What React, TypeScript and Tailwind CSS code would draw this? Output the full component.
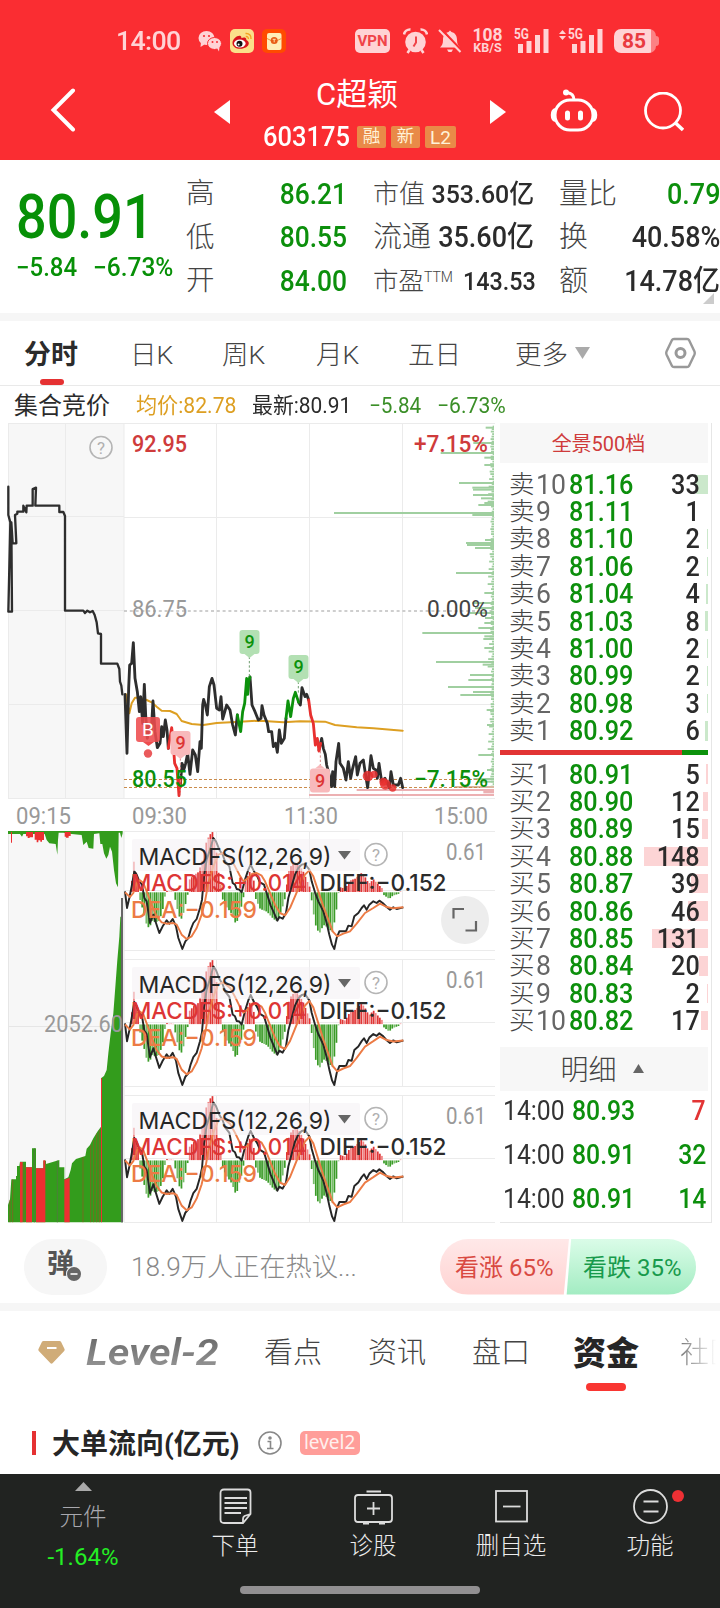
import clsx from 'clsx';

type Point = [number, number];

const GREEN = '#0c8f0c';
const RED = '#e23434';

const asks: [string, string, number, number][] = [
  ['10', '81.16', 33, 12], ['9', '81.11', 1, 0], ['8', '81.10', 2, 1], ['7', '81.06', 2, 1], ['6', '81.04', 4, 2],
  ['5', '81.03', 8, 3], ['4', '81.00', 2, 1], ['3', '80.99', 2, 1], ['2', '80.98', 3, 1], ['1', '80.92', 6, 3],
];
const bids: [string, string, number, number][] = [
  ['1', '80.91', 5, 2], ['2', '80.90', 12, 5], ['3', '80.89', 15, 6], ['4', '80.88', 148, 64], ['5', '80.87', 39, 17],
  ['6', '80.86', 46, 20], ['7', '80.85', 131, 56], ['8', '80.84', 20, 9], ['9', '80.83', 2, 1], ['10', '80.82', 17, 7],
];
const trades = [
  { price: '80.93', qty: 7, up: true },
  { price: '80.91', qty: 32, up: false },
  { price: '80.91', qty: 14, up: false },
];

// Chart series are stored at 3x resolution and scaled down when drawn
const AUCTION = '25,215 25,300 31,322 25,590 36,590 34,322 38,385 49,385 45,300 52,296 52,290 70,290 70,272 79,292 80,272 98,272 98,222 108,218 106,272 178,272 178,291 190,291 195,303 195,587 250,587 255,594 262,587 270,592 278,588 284,600 290,622 294,655 303,657 303,746 352,746 358,762 360,800 364,812 367,838';
const PRICE: { color: string; points: string }[] = [
  { color: '#2e2e2e', points: '375,838 381,1015 386,820 389,750 395,745 400,683 405,790 412,830 418,890 422,845 428,925 433,808 437,900 442,970 448,930 454,945 459,858 465,950 472,998 480,985 485,935 490,965 496,915 501,945 505,1000' },
  { color: '#2e2e2e', points: '541,1110 546,1045 552,1062 557,1045 563,1015 570,1078 578,1005 586,1020 593,1070 600,980 604,1000 608,870 611,853 616,870 622,900 628,815 636,790 642,810 650,880 658,885 663,845 668,912 680,870 690,885 698,930 706,960 712,900' },
  { color: '#2e2e2e', points: '750,786 756,870 765,890 775,915 783,910 786,872 792,900 802,925 806,950 815,950 820,995 827,985 832,1012 838,945 844,985 853,970 858,910' },
  { color: '#2e2e2e', points: '896,862 901,870 906,818 915,845 920,838 926,855' },
  { color: '#2e2e2e', points: '957,1005 965,970 970,1000 976,1018 980,1050 988,1080 995,1115 998,1070 1004,1115 1008,1040 1016,985 1020,1045 1030,1060 1038,1095 1045,1040 1052,1090 1058,1060 1067,1025 1072,1080 1080,1045 1090,1035 1096,1075 1103,1118 1108,1070 1113,1022 1120,1060 1128,1065 1132,1090 1137,1045 1145,1100 1155,1090 1168,1118 1173,1070 1180,1110 1195,1110 1202,1090 1208,1118' },
  { color: '#e8302f', points: '505,1000 515,938 519,975 524,1045 531,1060 537,1142 541,1095' },
  { color: '#e8302f', points: '926,855 932,900 940,925 946,990 952,970 957,1008 962,985' },
  { color: '#0c920c', points: '712,900 722,950 728,890 734,865 740,790 743,838 746,800 750,786' },
  { color: '#0c920c', points: '858,910 864,858 872,905 880,850 886,832 896,862' },
];
const AVERAGE = '378,838 383,870 388,895 395,865 405,848 420,848 440,855 455,862 470,875 485,887 510,888 530,897 545,918 575,927 610,930 650,924 720,920 780,917 850,922 900,919 975,920 1005,930 1070,937 1120,940 1208,947';

const PROFILE: Point[] = [
  [38, 737], [84, 700], [114, 602], [128, 733], [150, 733], [204, 657], [218, 697], [224, 699], [240, 699], [250, 723],
  [264, 733], [270, 715], [294, 282], [300, 697], [375, 735], [384, 678], [390, 681], [399, 705], [474, 648], [534, 733],
  [564, 697], [579, 705], [594, 690], [609, 735], [624, 733], [639, 715], [654, 547], [664, 733], [672, 730], [699, 733],
  [741, 588], [749, 728], [780, 690], [795, 685], [816, 624], [831, 699], [840, 661], [885, 740], [930, 741], [1020, 715],
  [1065, 741], [1092, 700], [1100, 715],
];

const DIFF = '375,215 381,265 388,235 395,200 403,155 410,165 418,185 426,195 433,235 440,245 450,310 460,285 468,310 478,340 488,320 500,302 508,312 518,298 528,320 535,355 547,388 556,365 565,355 572,330 580,310 590,298 600,265 606,240 612,170 620,120 630,90 640,55 648,65 658,90 668,105 675,125 688,140 698,190 705,195 710,208 718,210 725,218 735,180 745,150 752,135 762,155 772,170 780,188 792,195 800,220 812,258 820,275 832,303 838,292 848,297 858,280 865,235 875,200 885,165 895,145 905,135 915,133 928,150 935,185 945,218 955,245 970,275 980,310 988,345 996,375 1003,388 1010,355 1018,335 1038,335 1045,318 1055,320 1063,290 1075,280 1085,265 1092,257 1100,270 1108,255 1120,245 1130,250 1138,243 1148,250 1160,262 1170,270 1180,263 1190,268 1210,263';
const DEA = '375,218 390,232 400,220 410,190 420,182 430,190 440,215 455,255 470,290 485,308 500,312 520,310 530,315 545,345 560,358 575,350 590,325 605,285 615,245 625,190 640,140 655,105 670,100 690,115 705,140 718,165 730,185 745,175 758,162 770,160 785,168 795,185 810,220 825,255 840,280 855,287 870,265 885,230 900,195 915,165 928,152 940,170 955,215 970,260 985,300 998,335 1012,350 1030,342 1050,335 1070,312 1095,280 1120,265 1140,252 1160,262 1180,266 1210,263';
const HIST: Point[] = [
  [394, -20], [400, -100], [405, -62], [412, -50], [419, 20], [430, 60], [440, 100], [448, 108], [455, 85], [465, 90], [478, 85],
  [488, 50], [495, 8], [503, -8], [510, 6], [516, -10], [523, 12], [530, 45], [541, 85], [548, 70], [555, 40], [562, 12],
  [566, -35], [580, -50], [595, -60], [605, -90], [615, -140], [625, -165], [636, -182], [642, -165], [648, -130], [655, -60],
  [662, -20], [667, 20], [680, 45], [695, 65], [708, 98], [718, 60], [728, 30], [735, -30], [745, -55], [752, -65], [762, -30],
  [767, 20], [780, 50], [800, 58], [820, 80], [832, 88], [840, 65], [850, 35], [858, 5], [862, -50], [870, -75], [883, -90],
  [895, -85], [910, -60], [922, -30], [931, -10], [935, 30], [945, 95], [957, 125], [970, 98], [982, 105], [996, 120], [1006, 75],
  [1014, 8], [1018, -15], [1035, -10], [1050, -35], [1065, -40], [1085, -58], [1097, -42], [1106, -25], [1120, -38], [1132, -25], [1147, -10],
  [1151, 8], [1167, 20], [1178, 10], [1196, 4], [1204, -5],
];

function levelAt(x: number) {
  const i = HIST.findIndex(([px]) => px >= x);
  if (i <= 0) return 0;
  const [x0, y0] = HIST[i - 1];
  const [x1, y1] = HIST[i];
  return y0 + ((y1 - y0) * (x - x0)) / (x1 - x0);
}

const macdBars = Array.from({ length: 131 }, (_, i) => {
  const x = 395 + i * 6.2;
  return { x, h: levelAt(x), dark: i % 3 !== 1 };
});

interface LabelProps {
  x: number;
  y: number;
  w: number;
  children: string;
  fill?: string;
  size?: number;
  weight?: number;
  family?: string;
}

function Label({ x, y, w, children, fill = '#999', size = 23.5, weight = 400, family = 'Roboto' }: LabelProps) {
  return (
    <text x={x} y={y} textLength={w} lengthAdjust="spacingAndGlyphs" fill={fill} fontSize={size} fontWeight={weight} fontFamily={`${family}, sans-serif`}>
      {children}
    </text>
  );
}

function HelpMark({ cx, cy }: { cx: number; cy: number }) {
  return (
    <g>
      <circle cx={cx} cy={cy} r="11" fill="none" stroke="#b5b5b5" strokeWidth="1.6" />
      <text x={cx} y={cy + 6} textAnchor="middle" fontSize="17" fill="#b0b0b0" fontFamily="Roboto, sans-serif">?</text>
    </g>
  );
}

function Flag({ x, y, text, bg, fg, tip }: { x: number; y: number; text: string; bg: string; fg: string; tip: 'down' | 'up' }) {
  return (
    <g>
      <rect x={x - 10} y={y - 12} width="20" height="24" rx="3" fill={bg} />
      {tip === 'down' ? <path d={`M${x - 5} ${y + 12}h10l-5 4z`} fill={bg} /> : <path d={`M${x - 5} ${y - 12}h10l-5 -4z`} fill={bg} />}
      <text x={x} y={y + 6} textAnchor="middle" fontSize="18" fontWeight="500" fill={fg} fontFamily="Roboto, sans-serif">{text}</text>
    </g>
  );
}

function MacdPanel({ top, height, labelShift }: { top: number; height: number; labelShift: number }) {
  const k = height / 119;
  return (
    <g>
      <g stroke="#ebebeb" fill="none">
        <path d={`M124 ${top}.5H495M124 ${top + height}.5H495M402.5 ${top}V${top + height}M216.5 ${top}V${top + height}M309.5 ${top}V${top + height}M124 ${top + height / 2}H495`} />
      </g>
      <g transform={`translate(0 ${top}) scale(0.33333 ${0.33333 * k}) translate(0 -34)`}>
        {macdBars.map(({ x, h, dark }) => (
          <rect
            key={x}
            x={x - 2}
            width="5.2"
            y={h < 0 ? 217 + h : 218}
            height={Math.abs(h)}
            fill={h < 0 ? (dark ? '#e03636' : '#f08484') : dark ? '#3b9c28' : '#79bd6b'}
          />
        ))}
        <polyline points={DIFF} fill="none" stroke="#262626" strokeWidth="5.800" strokeLinejoin="round" />
        <polyline points={DEA} fill="none" stroke="#ec7b45" strokeWidth="5.800" strokeLinejoin="round" />
      </g>
      <g transform={`translate(0 ${labelShift})`}>
        <rect x="132" y="839" width="228" height="32" rx="2" fill="#f4f0f4" fillOpacity="0.55" />
        <Label x={138.5} y={864.5} w={193} fill="#262626" size={23.5} family="Inter">MACDFS(12,26,9)</Label>
        <path d="M338 851h13l-6.500 8.500z" fill="#666" />
        <HelpMark cx={376} cy={854.500} />
        <Label x={446} y={860} w={40} size={23}>0.61</Label>
        <Label x={131} y={891} w={175} fill="#dd3535" size={23} weight={500} family="Inter">MACDFS:+0.014</Label>
        <Label x={319.5} y={891} w={127} fill="#2b2b2b" size={23} weight={500} family="Inter">DIFF:−0.152</Label>
        <Label x={131} y={917.5} w={126} fill="#ec7b45" size={23} weight={500} family="Inter">DEA:−0.159</Label>
      </g>
    </g>
  );
}

function StockChart() {
  return (
    <svg className="block h-[800px] w-[500px] shrink-0" viewBox="0 423 500 800">
      {/* grid */}
      <rect x="8" y="423" width="116" height="375" fill="#f7f7f7" />
      <g stroke="#ebebeb" fill="none">
        <path d="M8 423.5H495M8 798.5H495M8.5 423V798M65.500 423V798M124 423V798M216.500 423V798M309.500 423V798M402.500 423V798" />
        <path d="M8 516.500H124M8 610.500H124M8 704.500H495M124 517.500H495" />
      </g>
      <path d="M124 611H495" stroke="#bfbfbf" strokeWidth="1.4" strokeDasharray="3 2.800" />

      {/* price distribution */}
      <g transform="translate(240 415) scale(0.33333)">
        {Array.from({ length: 145 }, (_, i) => (
          <rect key={i} x={762 - (4 + ((i * 37) % 11) * (i % 3 === 0 ? 1.5 : 0.7))} y={32 + i * 7.5} width={4 + ((i * 37) % 11) * (i % 3 === 0 ? 1.5 : 0.7)} height="5.500" fill="#a0cfa0" />
        ))}
        {PROFILE.map(([y, x]) => <rect key={y} x={x} y={y - 3} width={762 - x} height="6" fill="#a0cfa0" />)}
        <rect x="350" y="1122" width="412" height="6" fill="#ecb0b2" />
        <rect x="645" y="1113" width="117" height="6" fill="#d8b9a0" />
        <rect x="730" y="1128" width="32" height="7" fill="#ecb0b2" />
        <rect x="207" y="1137" width="555" height="6" fill="#ecb0b2" />
      </g>
      <path d="M124 779.500H480M124 787.500H480" stroke="#c98b4c" strokeDasharray="3 2" />

      {/* price lines */}
      <g transform="translate(0 415) scale(0.33333)" fill="none" strokeLinejoin="round" strokeLinecap="round">
        <polyline points={AUCTION} stroke="#2e2e2e" strokeWidth="7" />
        <polyline points={AVERAGE} stroke="#dd9f22" strokeWidth="6" />
        {PRICE.map((seg) => <polyline key={seg.points} points={seg.points} stroke={seg.color} strokeWidth="8.500" />)}
        <path d="M541 1030V1140M961 1008V1055" stroke="#d98a8a" strokeWidth="3" strokeDasharray="7 6" strokeLinecap="butt" />
        <path d="M748 725V785M895 800V835" stroke="#6d9c6d" strokeWidth="3" strokeDasharray="7 6" strokeLinecap="butt" />
        <g fill="#e8302f" fillOpacity="0.85">
          <circle cx="1104" cy="1083" r="16" />
          <circle cx="1122" cy="1078" r="11" />
          <circle cx="1150" cy="1100" r="12" />
          <circle cx="1156" cy="1108" r="16" />
          <circle cx="1178" cy="1119" r="11" />
        </g>
      </g>
      <Flag x={249.500} y={642} text="9" bg="#b3e0b3" fg="#0c920c" tip="down" />
      <Flag x={298.500} y={667} text="9" bg="#b3e0b3" fg="#0c920c" tip="down" />
      <Flag x={180.500} y={743} text="9" bg="#f8b9bb" fg="#dd3535" tip="down" />
      <Flag x={320} y={780.500} text="9" bg="#f8b9bb" fg="#dd3535" tip="up" />
      <g>
        <rect x="136" y="717" width="24" height="25" rx="3" fill="#ee4c4e" fillOpacity="0.88" />
        <path d="M143 742h11l-5.500 4z" fill="#ee4c4e" />
        <text x="148" y="736" textAnchor="middle" fontSize="19" fontWeight="400" fill="#fff" fontFamily="Roboto, sans-serif">B</text>
        <circle cx="148" cy="753.500" r="4.200" fill="#ea5a5c" />
      </g>
      <HelpMark cx={101} cy={447.500} />
      <Label x={132} y={452} w={55} fill="#cf3b3b" weight={500}>92.95</Label>
      <Label x={132} y={616.500} w={55}>86.75</Label>
      <Label x={132} y={787} w={55} fill={GREEN} weight={500}>80.55</Label>
      <Label x={414} y={452} w={74} fill="#cf3b3b" weight={500}>+7.15%</Label>
      <Label x={427} y={616.500} w={61} fill="#444">0.00%</Label>
      <Label x={414} y={787} w={74} fill={GREEN} weight={500}>−7.15%</Label>
      <Label x={16} y={823.500} w={55}>09:15</Label>
      <Label x={132} y={823.500} w={55}>09:30</Label>
      <Label x={284} y={823.500} w={54}>11:30</Label>
      <Label x={434} y={823.500} w={54}>15:00</Label>

      {/* auction volume */}
      <rect x="8" y="831" width="116" height="391" fill="#f7f7f7" />
      <path d="M8.500 831V1222M65.500 831V1222M8 1026.500H124M124 831V1222" stroke="#e6e6e6" />
      <g transform="translate(0 820) scale(0.33333)">
        <path fill="#339c1c" d="M24 33H368V40L364 54L360 38H356L354 202L348 190L342 150L336 95L330 80L325 105L319 116L312 100L307 72L301 72L298 40L282 42L280 86L266 84L260 65L250 75L245 45L215 42L190 38H176L174 60L172 104L167 72L148 70L140 60L134 42L70 42L66 50L60 42H24Z" />
        <path fill="#ec2f31" d="M33 36h3v32h-3zM78 36h21v16h-10v2h-6v-5h-5zM104 36h28v24h-6v5h-5v-4h-6v6h-5v-8h-6zM194 36h18v12h-6v5h-8v-3h-4z" />
        <path fill="#339c1c" d="M24 1207V1155L30 1138L34 1078H48V1068H51V1038H58L60 1025H78V1042H96V985H108V1045H130V1022H138V1032L178 1020V1042H193V1078L205 1072L212 1050L216 1030L228 1017L256 1008L260 986L270 975L280 955L292 935L303 920V775L312 768L320 750L325 700L332 640L340 580L346 500L352 420L358 350L361 290H369V1207Z" />
        <path fill="#ec2f31" d="M60 1026h8v181h-8zM78 1042h18v165h-18zM108 1045h22v162h-22zM130 1021h6v186h-6zM193 1079l16-6v134h-16zM303 775h3v432h-3z" />
        <path stroke="#a84a25" strokeOpacity="0.75" strokeWidth="2.200" d="M30 1140V1207M38 1078V1207M72 1035V1207M249 1012V1207M272 975V1207M281 960V1207M290 940V1207M298 930V1207" />
        <path stroke="#4d7d3a" strokeWidth="3" d="M103 985V1207M172 1022V1207" />
        <rect x="363" y="234" width="6" height="973" fill="#666" />
      </g>
      <Label x={44} y={1032} w={79}>2052.60</Label>

      {/* indicator panels */}
      <MacdPanel top={831} height={119} labelShift={0} />
      <MacdPanel top={959} height={127} labelShift={128} />
      <MacdPanel top={1095} height={127} labelShift={264} />
      <circle cx="465" cy="920" r="24" fill="#ededed" />
      <path d="M453.500 918.500V909H464M465.500 930.500H476V921" fill="none" stroke="#666" strokeWidth="2.200" />
    </svg>
  );
}

function StatusBar() {
  return (
    <div className="flex h-[74px] items-center pl-[116px] pt-[8px] text-[#ffd3d5]">
      <span className="w-[82px] origin-left scale-x-[1.07] text-[25px] leading-none font-medium tracking-tight">14:00</span>
      <svg className="h-[24px] w-[24px]" viewBox="0 0 24 24" fill="currentColor">
        <ellipse cx="8.500" cy="9" rx="8" ry="7" />
        <path d="M3 13l-.5 5 4-2.500z" />
        <ellipse cx="16.500" cy="14.500" rx="7" ry="6" stroke="#fa2d32" />
        <path d="M19 19l2 3.500.5-5z" />
        <g fill="#fa2d32"><circle cx="6" cy="7" r="1.100" /><circle cx="11" cy="7" r="1.100" /><circle cx="14.500" cy="13" r="1" /><circle cx="19" cy="13" r="1" /></g>
      </svg>
      <svg className="ml-[8px] h-[24px] w-[24px]" viewBox="0 0 24 24">
        <rect width="24" height="24" rx="5" fill="#fbe08a" />
        <path d="M2.500 14c0-4 5-8 8-7 1 .5 1 1.500.8 2.200 2-1 5-1 5 1.300 0 1 2.500 1.300 2.500 3.800 0 3-4 5.500-8.500 5.500S2.500 17.500 2.500 14z" fill="#d9141c" />
        <ellipse cx="9.800" cy="14.500" rx="5.800" ry="4" fill="#fff" />
        <circle cx="9.500" cy="14.800" r="3" fill="#111" />
        <circle cx="8.600" cy="15.500" r="1" fill="#fff" />
        <path d="M15.500 4.500c3.500-.5 6 2 5.500 5.500M15.800 7.500c1.800-.2 2.800 1 2.500 2.500" fill="none" stroke="#f5a21f" strokeWidth="1.400" />
      </svg>
      <svg className="ml-[8px] h-[24px] w-[24px]" viewBox="0 0 24 24">
        <rect width="24" height="24" rx="5" fill="#ff4b00" />
        <rect x="5" y="4" width="14.500" height="17" rx="2" fill="#ffeeb8" />
        <path d="M5 9.500l7 3.500 7.500-3.500" fill="none" stroke="#ef9440" />
        <circle cx="12.200" cy="11.500" r="3.500" fill="#e85c16" />
        <path d="M10.700 10.300h3M12.200 10.300v3" stroke="#ffeeb8" strokeWidth=".9" />
      </svg>
      <span className="ml-[69px] flex h-[24px] w-[35px] items-center justify-center rounded-[5px] bg-[#ffd3d5] text-[15px] leading-none font-bold text-[#f04348]">VPN</span>
      <svg className="ml-[13px] h-[26px] w-[25px]" viewBox="0 0 25 26">
        <circle cx="12.500" cy="14" r="10.300" fill="currentColor" />
        <path d="M1 6.500A6 6 0 0 1 7.500 1.500M24 6.500A6 6 0 0 0 17.500 1.500M6.500 22l-2 3M18.500 22l2 3" stroke="currentColor" strokeWidth="2.600" fill="none" />
        <path d="M13 8.500v6l-2.500 4" stroke="#f04348" strokeWidth="2" fill="none" />
      </svg>
      <svg className="ml-[10px] h-[24px] w-[24px]" viewBox="0 0 24 24">
        <path d="M12 1.500l1.500 1.500c4 1 5.500 4 5.500 8 0 4 1 5.500 3 7.500H2c2-2 3-3.500 3-7.500 0-4 1.500-7 5.500-8z" fill="currentColor" />
        <path d="M9 20.500h6l-1.500 2.500h-3z" fill="currentColor" />
        <path d="M3 0l21 22" stroke="#fa2d32" strokeWidth="2.500" />
        <path d="M1 1l21.500 22" stroke="currentColor" strokeWidth="2" />
      </svg>
      <span className="ml-[9px] flex w-[33px] flex-col items-center font-bold">
        <span className="text-[17.500px] leading-[14px]">108</span>
        <span className="text-[12.500px] leading-[12px]">KB/S</span>
      </span>
      <Signal className="ml-[10px]" />
      <svg className="ml-[10px] mb-[12px] h-[10px] w-[7px]" viewBox="0 0 7 10" fill="currentColor"><path d="M3.500 0L7 4H0zM3.500 10L0 6h7z" /></svg>
      <Signal className="ml-[2px]" />
      <span className="ml-[11px] flex h-[24px] w-[42px] items-center overflow-hidden rounded-[7px] bg-[linear-gradient(90deg,#ffd3d5_37px,#fc8184_37px)] pl-[8px] text-[21px] leading-none font-bold text-[#e93a40]">85</span>
      <span className="h-[10px] w-[3px] rounded-r-full bg-[#fc8184]" />
    </div>
  );
}

function Signal({ className }: { className: string }) {
  return (
    <svg className={clsx('h-[26px] w-[35px] overflow-visible', className)} viewBox="0 0 35 26" fill="currentColor">
      <text x="0" y="11" textLength="15" lengthAdjust="spacingAndGlyphs" fontSize="14" fontWeight="700" fontFamily="Roboto, sans-serif">5G</text>
      <rect x="4" y="16" width="5" height="9" /><rect x="12.500" y="13" width="5" height="12" />
      <rect x="21" y="7" width="5" height="18" /><rect x="29.500" y="1" width="5" height="24" />
    </svg>
  );
}

function Header() {
  return (
    <header className="h-[160px] bg-[#fa2d32] text-white">
      <StatusBar />
      <div className="flex h-[86px] items-start">
        <svg className="ml-[50px] mt-[14px] h-[44px] w-[26px]" viewBox="0 0 26 44"><path d="M23 2.500L3.500 22 23 41.500" fill="none" stroke="#fff" strokeWidth="4" strokeLinecap="round" /></svg>
        <svg className="ml-[138px] mt-[26px] h-[24px] w-[16px]" viewBox="0 0 16 24" fill="#fff"><path d="M16 0v24L0 12z" /></svg>
        <div className="ml-[33px] flex w-[194px] flex-col">
          <div className="mt-[6px] h-[30px] pl-[53px] text-[31px] leading-[30px] whitespace-nowrap">C超颖</div>
          <div className="mt-[12px] flex h-[30px] items-center">
            <span className="w-[94px] origin-left scale-x-[.91] text-[28px] leading-none font-medium">603175</span>
            {['融', '新', 'L2'].map((t) => (
              <span key={t} className="mr-[5px] flex h-[22px] w-[29px] shrink-0 items-center justify-center rounded-[2px] bg-[#e98a48] text-[17.500px] leading-none text-[#fff3d8] last:mr-0 last:w-[31px] last:text-[19px]">{t}</span>
            ))}
          </div>
        </div>
        <svg className="ml-[33px] mt-[26px] h-[24px] w-[16px]" viewBox="0 0 16 24" fill="#fff"><path d="M0 0v24l16-12z" /></svg>
        <svg className="ml-[44px] mt-[15px] h-[44px] w-[48px]" viewBox="0 0 48 44" fill="none" stroke="#fff" strokeWidth="3">
          <rect x="5" y="11" width="38" height="30" rx="15" />
          <path d="M5.500 20C.5 21 .5 31 5.500 32M42.500 20c5 1 5 11 0 12" fill="#fff" strokeWidth="2" />
          <path d="M24 11C24 6 21 4 17 3.500" />
          <circle cx="16" cy="3.500" r="3" fill="#fff" stroke="none" />
          <path d="M17.500 24v5M30.500 24v5" strokeWidth="5" strokeLinecap="round" />
        </svg>
        <svg className="ml-[46px] mt-[18px] h-[40px] w-[40px]" viewBox="0 0 40 40" fill="none" stroke="#fff" strokeWidth="2.800"><circle cx="19" cy="18.500" r="17.500" /><path d="M31 30.500l8 7.500" strokeWidth="3.500" /></svg>
      </div>
    </header>
  );
}

function QuotePanel() {
  return (
    <section className="relative flex h-[153px] text-[#2b2b2b]">
      <div className="w-[187px] shrink-0 pl-[16px] font-medium text-[#079007]">
        <div className="mt-[27px] h-[60px] w-[150px] origin-left scale-x-[.885] text-[61px] leading-[60px]">80.91</div>
        <div className="mt-[7px] flex text-[25px] leading-[28px] whitespace-nowrap">
          <span className="w-[77px] origin-left scale-x-[.96]">−5.84</span>
          <span className="origin-left scale-x-[.98]">−6.73%</span>
        </div>
      </div>
      <div className="-ml-px flex w-[161px] shrink-0 flex-col pt-[12.500px]">
        {[['高', '86.21'], ['低', '80.55'], ['开', '84.00']].map(([k, v]) => (
          <div key={k} className="flex h-[43.500px] items-center justify-between">
            <span className="text-[28.500px] leading-none font-light text-[#444]">{k}</span>
            <span className="origin-right scale-x-[.91] text-[29px] leading-none font-medium text-[#0c8f0c]">{v}</span>
          </div>
        ))}
      </div>
      <div className="ml-[26px] flex w-[161px] shrink-0 flex-col pt-[12.500px] whitespace-nowrap">
        <div className="flex h-[43.500px] items-center justify-between">
          <span className="text-[26px] leading-none font-light text-[#444]">市值</span>
          <span className="origin-right scale-x-[.94] text-[26.500px] leading-none font-medium">353.60亿</span>
        </div>
        <div className="flex h-[43.500px] items-center justify-between">
          <span className="text-[29px] leading-none font-light text-[#444]">流通</span>
          <span className="origin-right scale-x-[.93] text-[29px] leading-none font-medium">35.60亿</span>
        </div>
        <div className="flex h-[43.500px] items-center justify-between">
          <span className="flex text-[25.500px] leading-none font-light text-[#444]">市盈<span className="text-[14px] leading-[16px]">TTM</span></span>
          <span className="-mr-[1px] origin-right scale-x-[.88] text-[26.500px] leading-none font-medium">143.53</span>
        </div>
      </div>
      <div className="ml-[25px] flex w-[161px] shrink-0 flex-col pt-[12.500px] whitespace-nowrap">
        {[['量比', '0.79'], ['换', '40.58%'], ['额', '14.78亿']].map(([k, v]) => (
          <div key={k} className="flex h-[43.500px] items-center justify-between">
            <span className="text-[29px] leading-none font-light text-[#444]">{k}</span>
            <span className={clsx('origin-right scale-x-[.93] text-[29px] leading-none font-medium', k === '量比' && '-mr-px text-[#0c8f0c]')}>{v}</span>
          </div>
        ))}
      </div>
      <svg className="absolute bottom-[9px] right-[6px] size-[11px]" viewBox="0 0 11 11"><path d="M11 0v11H0z" fill="#ccc" /></svg>
    </section>
  );
}

function PeriodTabs() {
  return (
    <nav className="flex h-[65px] items-center border-b border-[#e9e9e9] pl-[24px] text-[26.500px] leading-none font-light text-[#444]">
      <span className="relative flex h-full w-[106px] items-center pt-[4px] text-[27px] font-bold text-[#2b2b2b]">
        分时
        <i className="absolute bottom-0 left-[16px] h-[6px] w-[24px] rounded-full bg-[#e53132]" />
      </span>
      <span className="w-[92px] pt-[4px]">日K</span>
      <span className="w-[94px] pt-[4px]">周K</span>
      <span className="w-[92px] pt-[4px]">月K</span>
      <span className="w-[107px] pt-[4px]">五日</span>
      <span className="flex w-[149px] items-center gap-[7px]"><span className="pt-[4px]">更多</span><svg className="h-[12px] w-[15px]" viewBox="0 0 15 12"><path d="M0 0h15L7.500 12z" fill="#aaa" /></svg></span>
      <svg className="h-[32px] w-[33px]" viewBox="0 0 33 32" fill="none" stroke="#999" strokeWidth="2.400" strokeLinejoin="round">
        <path d="M10 2h13q1.500 0 2 1l5.500 11.500q.6 1.500 0 3L25 29q-.5 1-2 1H10q-1.500 0-2-1L2.500 17.500q-.6-1.500 0-3L8 3q.5-1 2-1z" />
        <circle cx="16.500" cy="16" r="4.500" strokeWidth="3" />
      </svg>
    </nav>
  );
}

function InfoLine() {
  return (
    <div className="flex h-[37px] items-center pl-[14px] pt-[3px] text-[22px] leading-none whitespace-nowrap text-[#2b2b2b]">
      <span className="w-[122px] text-[24px]">集合竞价</span>
      <span className="w-[116px]"><span className="inline-block origin-left scale-x-[.96] text-[#dd9f22]">均价:82.78</span></span>
      <span className="w-[117px]"><span className="inline-block origin-left scale-x-[.95]">最新:80.91</span></span>
      <span className="w-[68px]"><span className="inline-block origin-left scale-x-[.94] text-[#3b8f28]">−5.84</span></span>
      <span className="inline-block origin-left scale-x-[.96] text-[#3b8f28]">−6.73%</span>
    </div>
  );
}

function BookRow({ side, row }: { side: '卖' | '买'; row: [string, string, number, number] }) {
  const [level, price, qty, depth] = row;
  return (
    <div className="relative flex h-[27.400px] items-center leading-[27px]">
      <i className={clsx('absolute right-0 top-[4px] h-[19.500px]', side === '卖' ? 'bg-[#cbe8cb]' : 'bg-[#fcd4d5]')} style={{ width: depth }} />
      <span className="relative flex w-[69px] items-center pl-[9px] text-[25.500px] font-light text-[#444]">
        {side}<span className="ml-[1px] origin-left scale-x-[.95] text-[28px] font-normal text-[#666]">{level}</span>
      </span>
      <span className="relative origin-left scale-x-[.885] text-[28.500px] font-medium text-[#0c8f0c]">{price}</span>
      <span className="relative ml-auto origin-right scale-x-[.9] pr-[9px] text-[28px] font-medium text-[#2b2b2b]">{qty}</span>
    </div>
  );
}

function OrderBook() {
  return (
    <aside className="h-[800px] w-[212px] border-b border-r border-[#e6e6e6] pr-[3px]">
      <div className="flex h-[40px] items-center justify-center bg-[#f7f7f7] pt-[2px] pr-[11px] text-[20px] leading-none text-[#cf3b3b]">全景500档</div>
      <div className="pt-[7.500px]">{asks.map((r) => <BookRow key={r[0]} side="卖" row={r} />)}</div>
      <div className="mt-[5.500px] flex h-[5px]"><div className="w-[182px] bg-[#e23434]" /><div className="flex-1 bg-[#0c920c]" /></div>
      <div className="pt-[5.500px]">{bids.map((r) => <BookRow key={r[0]} side="买" row={r} />)}</div>
      <div className="mt-[12.500px] flex h-[44px] items-center justify-center gap-[16px] bg-[#f7f7f7] pr-[4px] text-[28px] leading-none font-light text-[#444]">
        <span className="pt-[4px]">明细</span>
        <svg className="h-[9px] w-[11px]" viewBox="0 0 11 9"><path d="M0 9L5.500 0 11 9z" fill="#666" /></svg>
      </div>
      <div className="-mt-[2px]">
        {trades.map((t, i) => (
          <div key={i} className="flex h-[43.800px] items-center pl-[3px] pr-[2px] text-[27.500px] leading-none font-medium">
            <span className="w-[69px] origin-left scale-x-[.9] font-normal text-[#333]">14:00</span>
            <span className="origin-left scale-x-[.9] text-[#0c8f0c]">{t.price}</span>
            <span className="ml-auto origin-right scale-x-[.9]" style={{ color: t.up ? RED : GREEN }}>{t.qty}</span>
          </div>
        ))}
      </div>
    </aside>
  );
}

function DiscussBar() {
  return (
    <div className="flex h-[80px] items-center pl-[24px]">
      <div className="relative mt-[7px] h-[56px] w-[83px] rounded-full bg-[#f6f6f6] pl-[23px] pt-[12px] text-[27px] leading-none font-bold text-[#555]">
        弹
        <svg className="absolute left-[42px] top-[27px] size-[16px]" viewBox="0 0 16 16"><circle cx="8" cy="8" r="8" fill="#f6f6f6" /><circle cx="8" cy="8" r="7" fill="#666" /><path d="M4.500 8h7" stroke="#fff" strokeWidth="1.600" /></svg>
      </div>
      <span className="ml-[24px] mt-[9px] w-[309px] text-[26.200px] leading-none font-light whitespace-nowrap text-[#888]">18.9万人正在热议...</span>
      <div className="relative mt-[7px] flex h-[56px] w-[256px] overflow-hidden rounded-full text-[24px] leading-none whitespace-nowrap">
        <div className="flex w-[129px] items-center bg-linear-to-b from-[#ffe8e8] to-[#ffd3d2] pl-[15px] pt-[2px] text-[#d94a42] [clip-path:polygon(0_0,100%_0,96%_100%,0_100%)]">看涨 65%</div>
        <div className="-ml-[3px] flex w-[130px] items-center bg-linear-to-b from-[#dafce8] to-[#a2ecc2] pl-[17px] pt-[2px] text-[#189a4c] [clip-path:polygon(4%_0,100%_0,100%_100%,0.5%_100%)]">看跌 35%</div>
      </div>
    </div>
  );
}

function SectionTabs() {
  return (
    <nav className="flex h-[82px] items-center pl-[38px] text-[29px] leading-none font-light whitespace-nowrap text-[#444]">
      <svg className="h-[23px] w-[27px]" viewBox="0 0 27 23"><path d="M5.500 0h16q1 0 1.500.8L26.500 8q.5 1-.3 1.900L14.500 22.200q-1 .9-2 0L.8 9.900Q0 9 .5 8L4 .8Q4.500 0 5.500 0z" fill="#d0ac78" /><path d="M9 7h9.500" stroke="#fff" strokeWidth="2" /></svg>
      <span className="ml-[21px] w-[178px]"><span className="inline-block origin-left scale-x-[1.12] bg-linear-to-b from-[#666] to-[#999] bg-clip-text pr-[4px] text-[37px] font-semibold text-transparent italic">Level-2</span></span>
      <span className="w-[104px] pt-[2px]">看点</span>
      <span className="w-[104px] pt-[2px]">资讯</span>
      <span className="w-[101px] pt-[2px]">盘口</span>
      <span className="relative flex h-full w-[107px] items-center pt-[3px] text-[33px] font-black text-[#262626]">
        资金
        <i className="absolute bottom-[2px] left-[13px] h-[8px] w-[40px] rounded-full bg-[#f93632]" />
      </span>
      <span className="w-[38px] overflow-hidden bg-linear-to-r from-[#777] to-white to-95% bg-clip-text pt-[2px] text-transparent">社区</span>
    </nav>
  );
}

const navItems = [
  { label: '下单', icon: <path d="M5 1.500h23.500q3 0 3 3v21.500L24 35H5q-3.500 0-3.500-3.500V5Q1.500 1.500 5 1.500zM24 35v-4q0-2 1.500-3l6-2M5.500 10H28M5.500 15H28M5.500 20H28M5.500 25H22" /> },
  { label: '诊股', icon: <><rect x="-2" y="7" width="37" height="27" rx="3" /><path d="M9.500 3.500H24M10 20.500h13M16.500 14v13M6 35.500h6M22 35.500h6" /></> },
  { label: '删自选', icon: <><rect x="1" y="3" width="31" height="30.500" /><path d="M8 18.500h17.500" /></> },
  { label: '功能', icon: <><circle cx="16.500" cy="18.500" r="16.500" /><path d="M9.500 13.500h15M9.500 23.500h15" /></> },
];

function BottomNav() {
  return (
    <footer className="flex h-[134px] flex-col bg-[#212321] text-[#dcdcdc]">
      <div className="flex h-[112px]">
        <div className="flex w-[166px] flex-col items-center leading-none">
          <svg className="mt-[8px] h-[9px] w-[17px]" viewBox="0 0 17 9"><path d="M0 9l8.500-9L17 9z" fill="#aaa" /></svg>
          <span className="mt-[15px] text-[23.500px] font-light text-[#a8a8ae]">元件</span>
          <span className="mt-[15px] text-[24px] text-[#24ee24]">-1.64%</span>
        </div>
        {navItems.map(({ label, icon }) => (
          <div key={label} className="relative flex w-[138px] shrink-0 flex-col items-center last:w-[140px]">
            <svg className="mt-[14px] h-[38px] w-[33px] overflow-visible" viewBox="0 0 33 38" fill="none" stroke="#dcdcdc" strokeWidth="1.800">{icon}</svg>
            <span className="mt-[9px] text-[23.500px] leading-none font-light text-[#ececec]">{label}</span>
            {label === '功能' && <i className="absolute left-[92px] top-[16px] size-[12px] rounded-full bg-[#ee3034]" />}
          </div>
        ))}
      </div>
      <div className="h-[8px] w-[240px] self-center rounded-full bg-[#929092]" />
    </footer>
  );
}

export default function App() {
  return (
    <div className="h-[1608px] w-[720px] overflow-hidden bg-white font-[Roboto,'Noto_Sans_CJK_SC',sans-serif]">
      <Header />
      <QuotePanel />
      <div className="h-[8px] bg-[#f6f6f6]" />
      <PeriodTabs />
      <InfoLine />
      <div className="flex">
        <StockChart />
        <OrderBook />
      </div>
      <DiscussBar />
      <div className="h-[8px] bg-[#f6f6f6]" />
      <SectionTabs />
      <div className="flex h-[81px] items-center pl-[32px] pt-[19px]">
        <i className="h-[24px] w-[4px] bg-[#e53132]" />
        <h2 className="ml-[16px] pt-[4px] text-[28px] leading-none font-bold whitespace-nowrap text-[#262626]">大单流向(亿元)</h2>
        <svg className="ml-[18px] size-[24px]" viewBox="0 0 24 24" fill="none" stroke="#888" strokeWidth="1.600"><circle cx="12" cy="12" r="11" /><path d="M9.500 10.500h3v7M9 17.500h6.500" /><circle cx="12" cy="7" r="1" fill="#888" /></svg>
        <span className="ml-[18px] flex h-[24px] w-[60px] items-center justify-center rounded-[5px] bg-[#ff9d99] pb-px text-[19px] leading-none text-[#fff0ee] font-['Noto_Sans',sans-serif]">level2</span>
      </div>
      <BottomNav />
    </div>
  );
}
